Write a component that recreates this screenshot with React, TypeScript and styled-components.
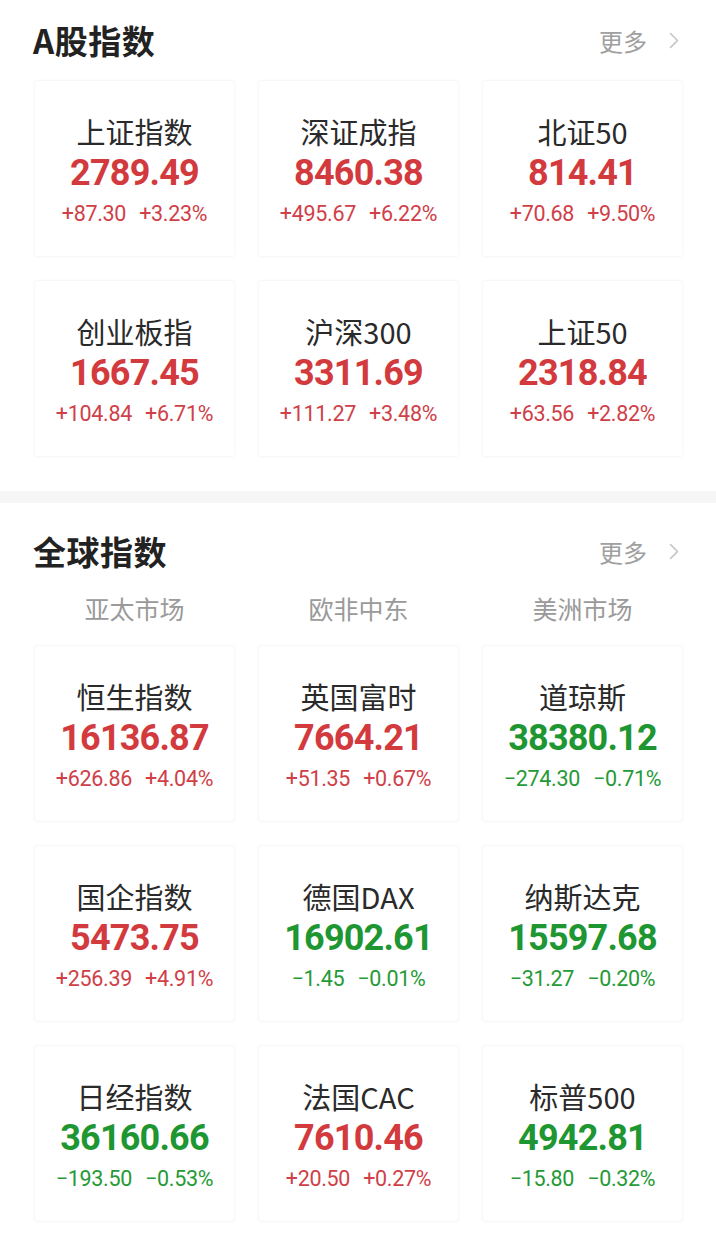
import React from "react";
import styled, { createGlobalStyle } from "styled-components";

const GlobalStyle = createGlobalStyle`
  html, body { margin: 0; padding: 0; background: #ffffff; }
  body { font-family: "Noto Sans CJK SC", "Noto Sans", sans-serif; }
  * { box-sizing: border-box; }
`;

type Item = { name: string; value: string; change: string; pct: string; up: boolean };

const aShares: Item[] = [
  { name: "上证指数", value: "2789.49", change: "+87.30", pct: "+3.23%", up: true },
  { name: "深证成指", value: "8460.38", change: "+495.67", pct: "+6.22%", up: true },
  { name: "北证50", value: "814.41", change: "+70.68", pct: "+9.50%", up: true },
  { name: "创业板指", value: "1667.45", change: "+104.84", pct: "+6.71%", up: true },
  { name: "沪深300", value: "3311.69", change: "+111.27", pct: "+3.48%", up: true },
  { name: "上证50", value: "2318.84", change: "+63.56", pct: "+2.82%", up: true },
];

const globalIdx: Item[] = [
  { name: "恒生指数", value: "16136.87", change: "+626.86", pct: "+4.04%", up: true },
  { name: "英国富时", value: "7664.21", change: "+51.35", pct: "+0.67%", up: true },
  { name: "道琼斯", value: "38380.12", change: "−274.30", pct: "−0.71%", up: false },
  { name: "国企指数", value: "5473.75", change: "+256.39", pct: "+4.91%", up: true },
  { name: "德国DAX", value: "16902.61", change: "−1.45", pct: "−0.01%", up: false },
  { name: "纳斯达克", value: "15597.68", change: "−31.27", pct: "−0.20%", up: false },
  { name: "日经指数", value: "36160.66", change: "−193.50", pct: "−0.53%", up: false },
  { name: "法国CAC", value: "7610.46", change: "+20.50", pct: "+0.27%", up: true },
  { name: "标普500", value: "4942.81", change: "−15.80", pct: "−0.32%", up: false },
];

const Page = styled.div`
  width: 716px;
  background: #fff;
`;

const Section = styled.section<{ $top?: number; $bottom?: number }>`
  padding: ${(p) => p.$top ?? 0}px 33px ${(p) => p.$bottom ?? 0}px 34px;
`;

const Header = styled.div`
  height: 80px;
  display: flex;
  align-items: center;
  justify-content: space-between;
`;

const Title = styled.h2`
  margin: 0 0 0 -1px;
  font-family: "Noto Sans CJK SC", sans-serif;
  font-size: 33px;
  font-weight: 700;
  color: #222;
  letter-spacing: 0.5px;
`;

const More = styled.div`
  display: flex;
  align-items: center;
  gap: 22px;
  padding-right: 4px;
  font-family: "Noto Sans CJK SC", sans-serif;
  font-size: 24px;
  color: #a0a0a0;
`;

const Divider = styled.div`
  height: 12px;
  background: #f6f6f6;
`;

const Tabs = styled.div`
  display: grid;
  grid-template-columns: repeat(3, 1fr);
  column-gap: 23px;
  margin-bottom: 20px;
`;

const Tab = styled.div`
  text-align: center;
  font-family: "Noto Sans CJK SC", sans-serif;
  font-size: 25px;
  line-height: 34px;
  color: #9a9a9a;
`;

const Grid = styled.div`
  display: grid;
  grid-template-columns: repeat(3, 1fr);
  gap: 23px;
`;

const Card = styled.div`
  height: 177px;
  background: #fff;
  border: 1px solid #f8f8f8;
  border-radius: 3px;
  box-shadow: 0 0 4px rgba(0, 0, 0, 0.025);
  display: flex;
  flex-direction: column;
  align-items: center;
  padding-top: 33px;
`;

const Name = styled.div`
  font-family: "Noto Sans CJK SC", sans-serif;
  font-size: 29px;
  line-height: 34px;
  color: #2a2a2a;
  white-space: nowrap;
`;

const Value = styled.div<{ $up: boolean }>`
  font-family: Roboto, "Liberation Sans", sans-serif;
  font-size: 36px;
  font-weight: 700;
  line-height: 50px;
  letter-spacing: -0.8px;
  color: ${(p) => (p.$up ? "#d23a3e" : "#1e9632")};
`;

const Change = styled.div<{ $up: boolean }>`
  display: flex;
  gap: 13px;
  font-family: Roboto, "Liberation Sans", sans-serif;
  font-size: 21.5px;
  line-height: 32px;
  letter-spacing: -0.3px;
  color: ${(p) => (p.$up ? "#cf4048" : "#259a36")};
`;

const Chevron = () => (
  <svg width="10" height="17" viewBox="0 0 10 17" fill="none">
    <polyline points="1.5,1.5 8.5,8.5 1.5,15.5" stroke="#c4c4c4" strokeWidth="1.6" strokeLinecap="round" strokeLinejoin="round" />
  </svg>
);

const IndexCard = ({ item }: { item: Item }) => (
  <Card>
    <Name>{item.name}</Name>
    <Value $up={item.up}>{item.value}</Value>
    <Change $up={item.up}>
      <span>{item.change}</span>
      <span>{item.pct}</span>
    </Change>
  </Card>
);

export default function App() {
  return (
    <Page>
      <GlobalStyle />
      <Section $bottom={34}>
        <Header>
          <Title>A股指数</Title>
          <More>
            <span>更多</span>
            <Chevron />
          </More>
        </Header>
        <Grid>
          {aShares.map((it) => (
            <IndexCard key={it.name} item={it} />
          ))}
        </Grid>
      </Section>
      <Divider />
      <Section $top={8} $bottom={20}>
        <Header>
          <Title>全球指数</Title>
          <More>
            <span>更多</span>
            <Chevron />
          </More>
        </Header>
        <Tabs>
          <Tab>亚太市场</Tab>
          <Tab>欧非中东</Tab>
          <Tab>美洲市场</Tab>
        </Tabs>
        <Grid>
          {globalIdx.map((it) => (
            <IndexCard key={it.name} item={it} />
          ))}
        </Grid>
      </Section>
    </Page>
  );
}
